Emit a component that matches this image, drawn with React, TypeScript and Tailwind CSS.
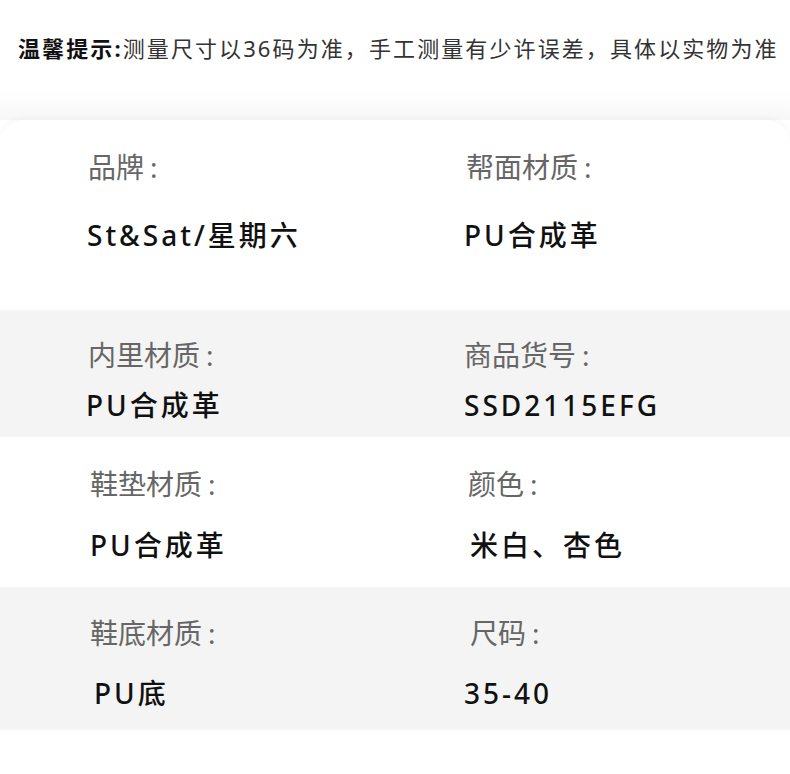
import * as React from 'react'

interface Cell {
  label: string
  value: string
  labelPl: string
  valuePl: string
}

interface Row {
  id: string
  bg: string
  height: string
  pt: string
  gap: string
  cells: [Cell, Cell]
}

const ROWS: Row[] = [
  {
    id: 'r1', bg: 'bg-white', height: 'h-[190px]', pt: 'pt-[27px]', gap: 'gap-[28px]',
    cells: [
      { label: '品牌', value: 'St&Sat/星期六', labelPl: 'pl-[88px]', valuePl: 'pl-[87px]' },
      { label: '帮面材质', value: 'PU合成革', labelPl: 'pl-[466px]', valuePl: 'pl-[464px]' },
    ],
  },
  {
    id: 'r2', bg: 'bg-[#f4f4f4]', height: 'h-[127px]', pt: 'pt-[25px]', gap: 'gap-[10px]',
    cells: [
      { label: '内里材质', value: 'PU合成革', labelPl: 'pl-[88px]', valuePl: 'pl-[86px]' },
      { label: '商品货号', value: 'SSD2115EFG', labelPl: 'pl-[464px]', valuePl: 'pl-[464px]' },
    ],
  },
  {
    id: 'r3', bg: 'bg-white', height: 'h-[150px]', pt: 'pt-[27px]', gap: 'gap-[21px]',
    cells: [
      { label: '鞋垫材质', value: 'PU合成革', labelPl: 'pl-[90px]', valuePl: 'pl-[90px]' },
      { label: '颜色', value: '米白、杏色', labelPl: 'pl-[468px]', valuePl: 'pl-[470px]' },
    ],
  },
  {
    id: 'r4', bg: 'bg-[#f4f4f4]', height: 'h-[143px]', pt: 'pt-[26px]', gap: 'gap-[20px]',
    cells: [
      { label: '鞋底材质', value: 'PU底', labelPl: 'pl-[90px]', valuePl: 'pl-[94px]' },
      { label: '尺码', value: '35-40', labelPl: 'pl-[470px]', valuePl: 'pl-[464px]' },
    ],
  },
]

function Label({ text, pl }: { text: string; pl: string }) {
  return (
    <div className={`absolute inset-0 ${pl} text-[28px] leading-[40px] text-[#666]`}>
      {text}<span className="ml-[6px]">:</span>
    </div>
  )
}

function SpecRow({ row }: { row: Row }) {
  const [a, b] = row.cells
  return (
    <div className={`${row.bg} ${row.height} ${row.pt} flex flex-col ${row.gap}`}>
      {/* labels */}
      <div className="relative h-[40px]">
        <Label text={a.label} pl={a.labelPl} />
        <Label text={b.label} pl={b.labelPl} />
      </div>
      {/* values */}
      <div className="relative h-[40px]">
        <div className={`absolute inset-0 ${a.valuePl} text-[28px] leading-[40px] font-medium tracking-[3px] text-[#111]`}>{a.value}</div>
        <div className={`absolute inset-0 ${b.valuePl} text-[28px] leading-[40px] font-medium tracking-[3px] text-[#111]`}>{b.value}</div>
      </div>
    </div>
  )
}

export default function App() {
  return (
    <div className="w-[790px] h-[774px] overflow-hidden bg-white font-['Noto_Sans','Noto_Sans_CJK_SC',sans-serif]">
      <div className="h-[120px] pt-[33px] pl-[18px] bg-gradient-to-b from-white from-75% to-[#f7f7f7]">
        <p className="text-[22px] leading-[30px] tracking-[2.1px] text-[#333] whitespace-nowrap">
          <span className="font-bold text-[#111]">温馨提示:</span>测量尺寸以36码为准，手工测量有少许误差，具体以实物为准
        </p>
      </div>
      <div className="rounded-t-[24px] bg-white shadow-[0_-2px_6px_rgba(0,0,0,0.04)] overflow-hidden">
        {ROWS.map(r => <SpecRow key={r.id} row={r} />)}
        <div className="h-[44px] bg-white" />
      </div>
    </div>
  )
}
